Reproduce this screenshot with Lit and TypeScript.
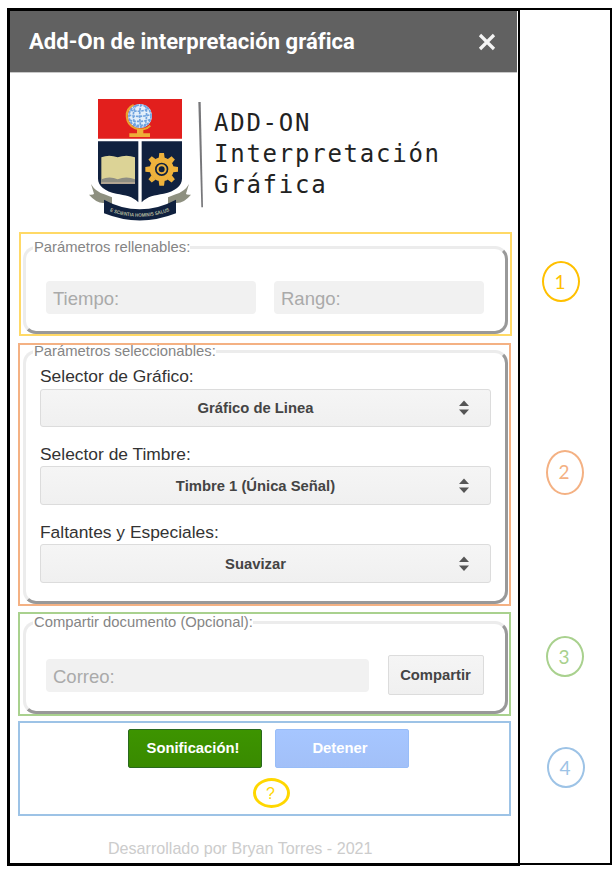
import { LitElement, html, css, svg } from "lit";
import { customElement, property } from "lit/decorators.js";

@customElement("addon-crest")
class AddonCrest extends LitElement {
  static styles = css`
    :host { display: block; width: 140px; height: 145px; }
    svg { display: block; }
    .motto { font: bold 15px "Liberation Sans", sans-serif; fill: #b9bda0; }
  `;

  render() {
    const teeth = [0, 45, 90, 135, 180, 225, 270, 315].map(
      (a) => svg`<path d="M-9 -34 L-7 -49 H7 L9 -34Z" transform="rotate(${a})" fill="#eeb23c"/>`
    );
    return html`<svg width="140" height="145" viewBox="0 0 420 435">
      <path d="M69 42H321V161H69Z" fill="#e21f1d" />
      <path d="M69 169H190V352C173 333 151 331 124 326C90 319 69 302 69 281Z" fill="#10213f" />
      <path d="M200 169H321V281C321 302 300 319 266 326C239 331 217 333 200 352Z" fill="#10213f" />
      <g>
        <path d="M176 60C146 73 149 118 181 130C199 137 217 132 226 122" fill="none" stroke="#e9a62f" stroke-width="6" />
        <circle cx="195" cy="93" r="36" fill="#e4effa" />
        <g fill="none" stroke="#6fa3df" stroke-width="5" stroke-dasharray="8 3">
          <circle cx="195" cy="93" r="33" />
          <path d="M184 60Q166 91 184 126M198 58Q190 91 198 128M212 62Q218 92 210 125M166 75Q194 84 222 71M161 90Q194 99 230 88M164 106Q194 114 228 103M174 119Q196 124 219 117" />
        </g>
        <path d="M186 131H205V145H225V156H163V145H186Z" fill="#eeae38" />
      </g>
      <path d="M79 217Q102 208 128 217Q154 208 180 217V297H79Z" fill="#dcd396" />
      <path d="M79 283Q104 272 128 283Q154 272 180 283V297H79Z" fill="#8d8d83" />
      <path d="M79 294H180" stroke="#bfae98" stroke-width="5" />
      <g transform="translate(260 253)">
        ${teeth}
        <circle r="28" fill="none" stroke="#eeb23c" stroke-width="16" />
        <circle r="12" fill="none" stroke="#eeb23c" stroke-width="6" />
      </g>
      <path d="M48 297Q61 320 88 328L111 337V362H87V354Q66 356 42 329Q56 330 57 326Z" fill="#8e9080" />
      <path d="M342 297Q329 320 302 328L279 337V362H303V354Q325 356 348 329Q333 330 333 326Z" fill="#8e9080" />
      <path d="M87 344Q194 402 303 344V385Q194 428 87 385Z" fill="#10213f" />
      <path id="ribbon" d="M104 379Q194 413 290 376" fill="none" />
      <text class="motto"><textPath href="#ribbon" textLength="184" lengthAdjust="spacingAndGlyphs">E SCIENTIA HOMINIS SALUS</textPath></text>
      <path d="M370 51H377L384 367H379Z" fill="#77777a" />
    </svg>`;
  }
}

@customElement("addon-select")
class AddonSelect extends LitElement {
  @property() label = "";
  @property() value = "";

  static styles = css`
    :host { display: block; height: 78px; }
    .label { font-size: 17.4px; line-height: 20px; height: 22px; color: #333; white-space: nowrap; }
    :host(:first-child) .label { height: 23px; }
    .box {
      box-sizing: border-box; height: 39px; border: 1px solid #dcdcdc; border-radius: 3px;
      background: linear-gradient(#f5f5f5, #f0f0f0);
      display: flex; align-items: center; padding-right: 21px;
    }
    :host(:first-child) .box { height: 38px; }
    .value { flex: 1; text-align: center; font-weight: bold; font-size: 14.8px; color: #444; padding-left: 10px; }
    svg { flex: none; margin-left: -1px; }
  `;

  render() {
    return html`<div class="label">${this.label}</div>
      <div class="box">
        <span class="value">${this.value}</span>
        <svg width="10" height="16" viewBox="0 0 10 16" fill="#555">
          <path d="M5 0.5L10 6H0Z" /><path d="M0 9.5H10L5 15Z" />
        </svg>
      </div>`;
  }
}

@customElement("app-root")
class AppRoot extends LitElement {
  static styles = css`
    :host {
      display: block; box-sizing: border-box; width: 616px; height: 870px; padding: 8px 0 0 7px;
      background: #fff; overflow: hidden; font-family: "Liberation Sans", Arial, sans-serif;
    }
    * { box-sizing: border-box; }
    .frame { display: flex; width: 605px; }
    .panel {
      width: 513px; height: 858px; border: 3px solid #000; border-right-width: 2px;
      display: flex; flex-direction: column;
    }
    .notes { width: 92px; height: 857px; border: 2px solid #000; border-left: 0; padding-top: 251px; }
    .header {
      height: 62px; width: 507px; background: #616161; color: #fff; border-bottom: 1px solid #c8c8c8;
      display: flex; align-items: center; justify-content: space-between; padding: 0 21px 0 19px;
      font: bold 22px/30px Roboto, sans-serif; flex: none;
    }
    .title { letter-spacing: 0.05px; white-space: nowrap; }
    .brand { display: flex; height: 159px; padding: 12px 0 0 65px; flex: none; }
    .name {
      font: 24px/31px "DejaVu Sans Mono", monospace; letter-spacing: 1.75px; color: #222;
      padding-top: 23px; margin-left: -1px; white-space: pre;
    }
    .group { width: 493px; margin-left: 8px; border: 2px solid; overflow: hidden; flex: none; }
    .fill { height: 104px; border-color: #ffd966; margin-left: 9px; }
    .pick { height: 263px; border-color: #f4b183; margin-top: 7px; }
    .share { height: 104px; border-color: #a9d18e; margin-top: 6px; }
    .run { height: 95px; border-color: #9dc3e6; margin-top: 5px; }
    fieldset {
      margin: 0 0 0 3px; width: 485px; padding: 0; border: 3px solid; min-width: 0;
      border-color: #ececec #999 #999 #ececec; border-radius: 13px;
    }
    .fill fieldset { height: 95px; margin: 5px 0 0 2px; }
    .pick fieldset { height: 261px; margin-top: -2px; }
    .share fieldset { height: 100px; }
    legend { margin-left: 7px; padding: 0 0 0 1px; font-size: 14.8px; line-height: 17px; height: 17px; color: #858585; white-space: nowrap; }
    .row { display: flex; padding: 25px 0 0 20px; gap: 18px; }
    .share .row { padding-top: 24px; gap: 19px; align-items: center; }
    .field {
      width: 210px; height: 33px; border-radius: 4px; background: #f1f1f1; color: #aaa;
      font-size: 18.5px; line-height: 35px; padding-left: 7px;
    }
    .mail { width: 323px; }
    .button {
      border: 1px solid #dcdcdc; border-radius: 2px; background: linear-gradient(#f5f5f5, #f0f0f0);
      color: #444; font-weight: bold; font-size: 14.8px; text-align: center;
      width: 96px; height: 40px; line-height: 38px; padding-right: 1px;
    }
    .selects { padding: 6px 0 0 14px; width: 465px; }
    .actions { display: flex; gap: 13px; padding: 6px 0 0 108px; }
    .go, .stop { width: 134px; height: 39px; line-height: 36px; color: #fff; padding-right: 4px; }
    .go { background: linear-gradient(#3d9400, #398a00); border-color: #29691d; }
    .stop { background: linear-gradient(#a6c6ff, #a2c0f8); border-color: #98bdf8; }
    .help {
      width: 37px; height: 30px; border: 3px solid #ffd700; border-radius: 50%; margin: 10px 0 0 233px;
      color: #ffd700; font-size: 16px; line-height: 25px; text-align: center; padding-right: 2px;
    }
    .credit { margin-top: 22px; padding-left: 98px; font-size: 16.1px; line-height: 20px; color: #ccc; white-space: nowrap; }
    .note {
      width: 38px; height: 41px; border: 2px solid; border-radius: 50%; margin-left: 26px;
      font: 19px/37px Lato, sans-serif; text-align: center; padding-right: 2px;
    }
    .n1 { color: #ffc000; margin-left: 22px; }
    .n2 { color: #f4b183; height: 45px; margin-top: 148px; line-height: 39px; }
    .n3 { color: #a9d18e; margin-top: 141px; }
    .n4 { color: #9dc3e6; margin: 70px 0 0 27px; }
  `;

  render() {
    return html`<div class="frame">
      <main class="panel">
        <header class="header">
          <span class="title">Add-On de interpretación gráfica</span>
          <svg width="18" height="18" viewBox="0 0 18 18"><path d="M2 2L16 16M16 2L2 16" stroke="#f4f4f4" stroke-width="3.2" /></svg>
        </header>
        <div class="brand">
          <addon-crest></addon-crest>
          <div class="name">ADD-ON
Interpretación
Gráfica</div>
        </div>
        <section class="group fill">
          <fieldset>
            <legend>Parámetros rellenables:</legend>
            <div class="row"><div class="field">Tiempo:</div><div class="field">Rango:</div></div>
          </fieldset>
        </section>
        <section class="group pick">
          <fieldset>
            <legend>Parámetros seleccionables:</legend>
            <div class="selects">
              <addon-select label="Selector de Gráfico:" value="Gráfico de Linea"></addon-select>
              <addon-select label="Selector de Timbre:" value="Timbre 1 (Única Señal)"></addon-select>
              <addon-select label="Faltantes y Especiales:" value="Suavizar"></addon-select>
            </div>
          </fieldset>
        </section>
        <section class="group share">
          <fieldset>
            <legend>Compartir documento (Opcional):</legend>
            <div class="row"><div class="field mail">Correo:</div><div class="button">Compartir</div></div>
          </fieldset>
        </section>
        <section class="group run">
          <div class="actions"><div class="button go">Sonificación!</div><div class="button stop">Detener</div></div>
          <div class="help">?</div>
        </section>
        <div class="credit">Desarrollado por Bryan Torres - 2021</div>
      </main>
      <aside class="notes">
        ${[1, 2, 3, 4].map((n) => html`<div class="note n${n}">${n}</div>`)}
      </aside>
    </div>`;
  }
}
